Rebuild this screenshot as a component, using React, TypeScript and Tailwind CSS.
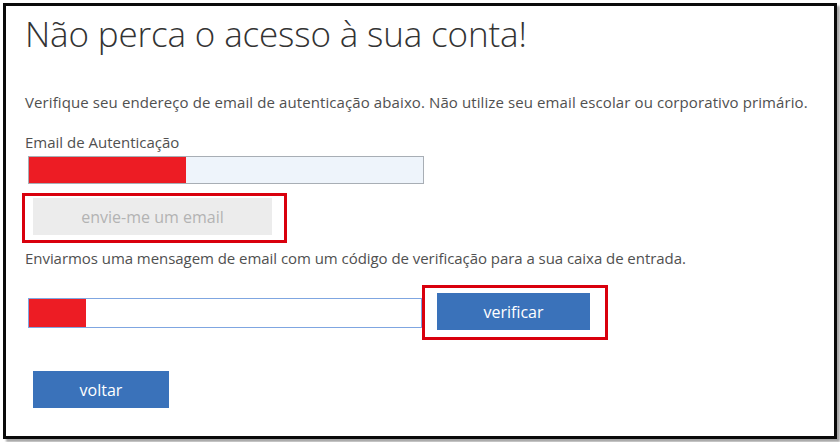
export default function App() {
  return (
    <div className="w-[840px] h-[442px] bg-white pl-[3px] pt-[3px]" style={{ fontFamily: "'Open Sans', 'Noto Sans', sans-serif" }}>
      <div className="w-[834px] h-[436px] border-[3px] border-[#0a0a0a] bg-white shadow-[3px_3px_2px_rgba(0,0,0,0.35)] pl-[19px] pt-[5px]">
        <h1 className="text-[35px] font-light leading-[46px] text-[#333] tracking-[-0.15px]">Não perca o acesso à sua conta!</h1>

        <p className="mt-[35px] text-[15px] leading-[20px] text-[#505050] tracking-[0.1px]">
          Verifique seu endereço de email de autenticação abaixo. Não utilize seu email escolar ou corporativo primário.
        </p>

        <div className="mt-[20px] text-[15px] leading-[20px] text-[#505050]">Email de Autenticação</div>

        <div className="mt-[4px] ml-[3px] flex w-[396px] h-[28px] border border-[#a8aeb5] bg-[#eef4fb]">
          <div className="w-[157px] h-full bg-[#ed1c24]" />
        </div>

        <div className="mt-[9px] ml-[-3px] w-[265px] h-[50px] border-[3px] border-[#d9000d] pl-[8px] pt-[2px]">
          <button className="w-[239px] h-[37px] bg-[#ececec] text-[16px] text-[#b3b3b3]">envie-me um email</button>
        </div>

        <p className="mt-[5px] text-[15px] leading-[20px] text-[#505050] tracking-[-0.05px]">
          Enviarmos uma mensagem de email com um código de verificação para a sua caixa de entrada.
        </p>

        <div className="mt-[17px] flex items-center">
          <div className="ml-[3px] flex w-[394px] h-[30px] border border-[#7fa6e1] bg-white">
            <div className="w-[57px] h-full bg-[#ed1c24]" />
          </div>
          <div className="w-[186px] h-[55px] border-[3px] border-[#d9000d] pl-[12px] pt-[5px]">
            <button className="w-[153px] h-[37px] bg-[#3a72ba] text-[16px] text-white">verificar</button>
          </div>
        </div>

        <button className="mt-[31px] ml-[8px] w-[136px] h-[37px] bg-[#3a72ba] text-[16px] text-white">voltar</button>
      </div>
    </div>
  );
}
